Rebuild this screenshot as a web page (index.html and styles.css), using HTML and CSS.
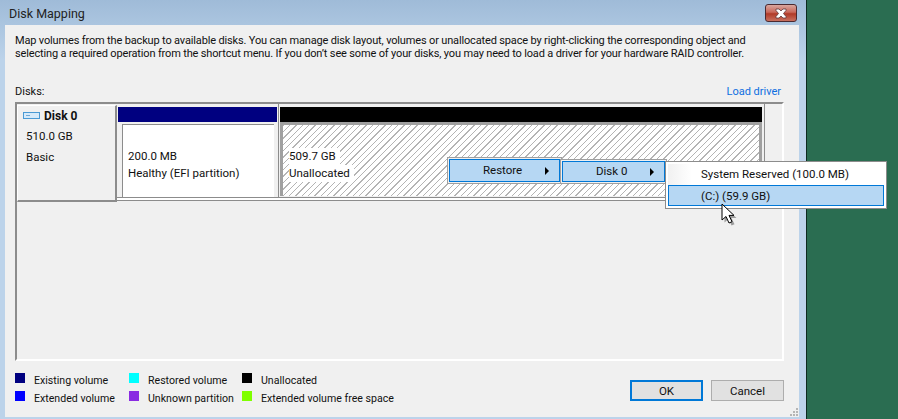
FILE: index.html
```html
<!DOCTYPE html>
<html lang="en">
<head>
<meta charset="utf-8">
<title>Disk Mapping</title>
<link rel="stylesheet" href="styles.css">
</head>
<body>
<div class="screen">
  <section class="window">
    <header class="titlebar">
      <span class="title">Disk Mapping</span>
      <button class="close" aria-label="Close">
        <svg width="14" height="11" viewBox="0 0 14 11"><path d="M2 1h3l2 2 2-2h3v1.500L9.500 5.500 12 8.500V10H9L7 8 5 10H2V8.500L4.500 5.500 2 2.500z" fill="#fff" stroke="#5e3a3e" stroke-width=".8"/></svg>
      </button>
    </header>
    <div class="client">
      <p class="intro">Map volumes from the backup to available disks. You can manage disk layout, volumes or unallocated space by right-clicking the corresponding object and<br>selecting a required operation from the shortcut menu. If you don’t see some of your disks, you may need to load a driver for your hardware RAID controller.</p>
      <div class="disks-head"><span>Disks:</span><a class="link">Load driver</a></div>
      <div class="panel">
        <div class="disk-row">
          <div class="disk-info">
            <div class="disk-name">
              <svg class="disk-icon" width="17" height="7" viewBox="0 0 17 7"><rect x=".5" y=".5" width="16" height="6" fill="#d6eafa" stroke="#4a9ad4"/><rect x="3" y="3" width="4" height="1" fill="#6fa9d6"/></svg>
              <b>Disk 0</b>
            </div>
            <div class="disk-line">510.0 GB</div>
            <div class="disk-line">Basic</div>
          </div>
          <div class="partition efi">
            <div class="bar navy"></div>
            <div class="part-body">
              <span>200.0 MB</span>
              <span>Healthy (EFI partition)</span>
            </div>
          </div>
          <div class="partition free">
            <div class="bar black"></div>
            <div class="part-body hatch">
              <span class="label">509.7 GB</span>
              <span class="label">Unallocated</span>
            </div>
          </div>
        </div>
      </div>
      <footer class="bottom">
        <div class="legend">
          <span class="swatch c1"></span><span>Existing volume</span>
          <span class="swatch c2"></span><span>Restored volume</span>
          <span class="swatch c3"></span><span>Unallocated</span>
          <span class="swatch c4"></span><span>Extended volume</span>
          <span class="swatch c5"></span><span>Unknown partition</span>
          <span class="swatch c6"></span><span>Extended volume free space</span>
        </div>
        <div class="buttons">
          <button class="btn default">OK</button>
          <button class="btn">Cancel</button>
        </div>
      </footer>
      <svg class="grip" width="9" height="9" viewBox="0 0 9 9" fill="#b5b5b5"><rect x="6" y="0" width="2" height="2"/><rect x="3" y="3" width="2" height="2"/><rect x="6" y="3" width="2" height="2"/><rect x="0" y="6" width="2" height="2"/><rect x="3" y="6" width="2" height="2"/><rect x="6" y="6" width="2" height="2"/></svg>
    </div>
    <div class="menu menu-restore"><div class="item"><span>Restore</span><i class="arrow"></i></div></div>
    <div class="menu menu-disk"><div class="item"><span>Disk 0</span><i class="arrow"></i></div></div>
    <div class="menu menu-vol">
      <div class="vol">System Reserved (100.0 MB)</div>
      <div class="vol on">(C:) (59.9 GB)</div>
    </div>
    <svg class="cursor" width="16" height="24" viewBox="0 0 16 24"><path d="M3 2v16l4-3.500 3 6.500 3-1.300-3-6.300h5z" fill="#000" opacity=".35" transform="translate(1.500 1.500)"/><path d="M2 1v16l4-3.500 3 6.500 3-1.300-3-6.300h5z" fill="#fff" stroke="#000" stroke-width="1"/></svg>
  </section>
  <div class="desktop"></div>
</div>
</body>
</html>
```

FILE: styles.css
```css
* { box-sizing: border-box; }
html, body { margin: 0; padding: 0; }
body { width: 898px; height: 419px; overflow: hidden; font-family: "Roboto", "Noto Sans", sans-serif; font-size: 11.500px; color: #111; }
.screen { display: flex; height: 419px; }
.window { position: relative; width: 806px; height: 419px; display: flex; flex-direction: column; padding: 0 7px 2px 5px; background: linear-gradient(180deg, #9fbbd8 0, #bcd3ea 60px, #bcd3ea 100%); }
.desktop { flex: 1; background: #2a6d51; border-left: 1px solid #0d2a20; }
.titlebar { height: 25px; flex: none; display: flex; justify-content: space-between; }
.title { font-size: 12.500px; line-height: 14px; padding: 7px 0 0 4px; color: #222; }
.close { width: 32px; height: 18px; margin: 4px 2px 0 0; padding: 0; border: 1px solid #4b2a30; border-radius: 3px; background: linear-gradient(180deg, #d9a79f 0, #c9685a 45%, #b03a28 55%, #c8705f 100%); display: flex; align-items: center; justify-content: center; }
.client { position: relative; flex: 1; background: #f0f0f0; padding: 9px 15px 0 10px; display: flex; flex-direction: column; }
.intro { margin: 0; line-height: 13px; height: 40px; white-space: nowrap; font-size: 11px; letter-spacing: -0.155px; }
.disks-head { display: flex; justify-content: space-between; height: 17px; padding-right: 3px; line-height: 14px; margin-top: 11px; font-size: 11px; }
.link { color: #0e6fe0; }
.panel { height: 259px; flex: none; border: 2px solid #a0a0a0; border-bottom-color: #fff; border-right-color: #fff; border-top-color: #8c8c8c; border-left-color: #8c8c8c; background: #f0f0f0; }
.disk-row { display: flex; height: 96px; }
.disk-info { width: 100px; height: 97px; border-right: 2px solid #8c8c8c; border-bottom: 2px solid #8c8c8c; border-top: 1px solid #fff; border-left: 1px solid #fff; padding: 1px 0 0 5px; margin-top: 1px; }
.disk-name { display: flex; align-items: center; height: 17px; gap: 4px; font-size: 12px; }
.disk-icon { flex: none; }
.disk-line { margin: 4px 0 0 3px; line-height: 17px; }
.partition { display: flex; flex-direction: column; height: 94px; padding: 3px 1px 0; border-right: 1px solid #8c8c8c; border-bottom: 1px solid #8c8c8c; box-shadow: 0 2px 0 #fff, 0 3px 0 #8c8c8c; }
.efi { width: 162px; flex: none; }
.free { width: 486px; flex: none; padding: 3px 2px 0 1px; }
.bar { height: 15px; flex: none; }
.navy { background: #000080; }
.black { background: #000; }
.part-body { flex: 1; margin: 2px 3px 0 4px; border-left: 1px solid #8c8c8c; border-top: 1px solid #8c8c8c; background: #fff; padding: 23px 0 0 5px; display: flex; flex-direction: column; line-height: 17px; }
.hatch { margin: 0 0 1px; border: 3px solid #a0a0a0; border-bottom: 0; padding: 23px 0 0 6px; align-items: flex-start; background: repeating-linear-gradient(135deg, #b4b4b4 0, #b4b4b4 1px, #fff 1px, #fff 4.500px); }
.label { background: #fff; padding-right: 4px; }
.bottom { display: flex; justify-content: space-between; align-items: flex-start; margin-top: 13px; }
.legend { display: grid; grid-template-columns: 10px 86px 10px 85px 10px auto; column-gap: 9px; row-gap: 4px; line-height: 14px; white-space: nowrap; font-size: 10.600px; }
.swatch { width: 10px; height: 10px; margin-top: -1px; }
.c1 { background: #000080; } .c2 { background: #00ffff; } .c3 { background: #000; }
.c4 { background: #0000ff; } .c5 { background: #8a2be2; } .c6 { background: #7fff00; }
.buttons { display: flex; gap: 8px; margin-top: 6px; }
.btn { width: 73px; height: 21px; padding: 0; font: inherit; color: #111; background: #e1e1e1; border: 1px solid #adadad; }
.default { border: 2px solid #0078d7; }
.grip { position: absolute; right: 0; bottom: 0; }
.menu { position: absolute; background: #f0f0f0; border: 1px solid #a0a0a0; padding: 1px; }
.item { height: 100%; background: #b6d7f3; border: 1px solid #0078d7; position: relative; display: flex; align-items: center; padding: 0 0 2px 33px; }
.menu-restore { left: 447px; top: 157px; width: 115px; height: 27px; }
.menu-disk { left: 560px; top: 159px; width: 107px; height: 25px; z-index: 1; }
.arrow { position: absolute; right: 10px; top: 50%; margin-top: -4px; border-left: 4px solid #000; border-top: 4px solid transparent; border-bottom: 4px solid transparent; }
.menu-vol { left: 665px; top: 161px; width: 222px; height: 48px; background: #fff; padding: 2px; border-color: #8c8c8c; z-index: 2; }
.vol { height: 21px; line-height: 21px; padding-left: 33px; background: linear-gradient(90deg, #f1f1f1 0, #fff 24px); }
.vol.on { background: #b6d7f3; border: 1px solid #0078d7; line-height: 20px; padding-left: 32px; }
.cursor { position: absolute; left: 720px; top: 203px; z-index: 3; overflow: visible; }
```
